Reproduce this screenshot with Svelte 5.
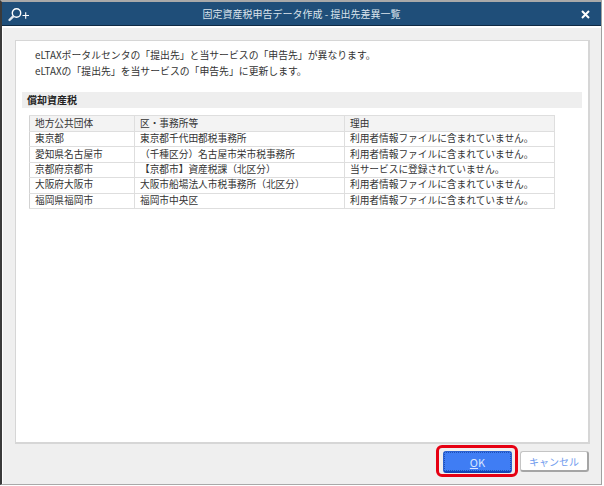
<script>
  const rows = [
    ['東京都', '東京都千代田都税事務所', '利用者情報ファイルに含まれていません。'],
    ['愛知県名古屋市', '（千種区分）名古屋市栄市税事務所', '利用者情報ファイルに含まれていません。'],
    ['京都府京都市', '【京都市】資産税課（北区分）', '当サービスに登録されていません。'],
    ['大阪府大阪市', '大阪市船場法人市税事務所（北区分）', '利用者情報ファイルに含まれていません。'],
    ['福岡県福岡市', '福岡市中央区', '利用者情報ファイルに含まれていません。']
  ];
</script>

<div class="window">
  <header class="titlebar">
    <svg class="logo" width="24" height="16" viewBox="0 0 24 16" aria-hidden="true">
      <circle cx="9.5" cy="7" r="4.2" fill="none" stroke="#fff" stroke-width="1.4" />
      <path d="M6.2 10.3 L2.5 14" stroke="#dfe7ef" stroke-width="2.4" stroke-linecap="round" />
      <path d="M15.5 9.5h6.5M18.7 6.2v6.6" stroke="#fff" stroke-width="1.1" />
    </svg>
    <h1>固定資産税申告データ作成 - 提出先差異一覧</h1>
    <svg class="close" width="9" height="9" viewBox="0 0 9 9" aria-hidden="true">
      <path d="M1 1L8 8M8 1L1 8" stroke="#fff" stroke-width="2" />
    </svg>
  </header>

  <main class="body">
    <section class="panel">
      <div class="message">
        <p>eLTAXポータルセンタの「提出先」と当サービスの「申告先」が異なります。</p>
        <p>eLTAXの「提出先」を当サービスの「申告先」に更新します。</p>
      </div>
      <h2>償却資産税</h2>
      <table>
        <thead>
          <tr><th class="c1">地方公共団体</th><th class="c2">区・事務所等</th><th class="c3">理由</th></tr>
        </thead>
        <tbody>
          {#each rows as r}
            <tr><td>{r[0]}</td><td>{r[1]}</td><td>{r[2]}</td></tr>
          {/each}
        </tbody>
      </table>
    </section>
    <footer class="actions">
      <button class="ok"><span><u>O</u>K</span></button>
      <button class="cancel">キャンセル</button>
    </footer>
  </main>
</div>

<style>
  :global(body) {
    margin: 0;
    background: #fff;
  }
  .window {
    box-sizing: border-box;
    width: 602px;
    height: 485px;
    display: flex;
    flex-direction: column;
    border-top: 2px solid #a9a9a9;
    border-left: 2px solid #3a3a3a;
    border-right: 1px solid #a0a0a0;
    border-bottom: 1px solid #a9a9a9;
    font-family: "Noto Sans CJK JP", "Liberation Sans", sans-serif;
    font-size: 9.7px;
    color: #333;
  }
  .titlebar {
    flex: none;
    box-sizing: border-box;
    height: 24px;
    background: #1f4e79;
    border-bottom: 1px solid #0f2a44;
    display: flex;
    align-items: center;
    padding: 0 11px 0 5px;
  }
  .logo {
    flex: none;
  }
  .titlebar h1 {
    flex: 1;
    margin: 0;
    font-size: 10px;
    font-weight: 400;
    color: #dbe4ec;
    text-align: center;
    padding-right: 9px;
  }
  .close {
    flex: none;
    margin-top: 1px;
  }
  .body {
    flex: 1;
    min-height: 0;
    background: #efefef;
    border-top: 2px solid #fff;
    border-left: 1px solid #fff;
    padding: 12px 11px 0 12px;
    display: flex;
    flex-direction: column;
  }
  .panel {
    box-sizing: border-box;
    height: 404px;
    background: #fff;
    border: 1px solid #d6d6d6;
    border-width: 1px 2px 2px 1px;
    padding: 0 6px 0 6px;
  }
  .message {
    padding: 6px 0 0 13px;
    height: 45px;
    font-size: 9.85px;
  }
  .message p {
    margin: 0;
    line-height: 16px;
  }
  h2 {
    margin: 0;
    background: #eeeeee;
    height: 16px;
    line-height: 16px;
    font-size: 10px;
    font-weight: 700;
    color: #222;
    padding-left: 5px;
    font-family: "Noto Sans CJK JP", serif;
  }
  table {
    margin: 7px 0 0 7px;
    width: 526px;
    table-layout: fixed;
    border-collapse: collapse;
    border: 1px solid #c9c9c9;
  }
  th, td {
    box-sizing: border-box;
    border: 1px solid #dedede;
    border-left-color: #d2d2d2;
    padding: 0 0 1px 5px;
    height: 15.4px;
    line-height: 13px;
    font-weight: 400;
    text-align: left;
    white-space: nowrap;
    overflow: hidden;
    color: #333;
  }
  th {
    background: #f3f3f3;
    height: 16px;
  }
  .c1 { width: 105px; }
  .c2 { width: 210px; }
  .actions {
    display: flex;
    justify-content: flex-end;
    align-items: flex-start;
    gap: 8px;
    padding: 7px 1px 0 0;
  }
  button {
    box-sizing: border-box;
    font-family: inherit;
    font-size: 10px;
    padding: 0;
    cursor: pointer;
  }
  .ok {
    position: relative;
    width: 69px;
    height: 22px;
    background: #3f7df4;
    color: #fff;
    border: 1px solid #2c62d0;
    border-bottom: 2px solid #1447b8;
    border-radius: 3px;
  }
  .ok span {
    display: flex;
    align-items: center;
    justify-content: center;
    height: 100%;
    box-sizing: border-box;
    border: 1px dotted #1f50b5;
    font-size: 11px;
    color: #d8e6ff;
  }
  .ok::after {
    content: "";
    position: absolute;
    inset: -7px -7px -6px -8px;
    border: 3px solid #e60012;
    border-radius: 6px;
  }
  .cancel {
    width: 69px;
    height: 21px;
    background: #fff;
    color: #6f9bee;
    border: 1px solid #c4c4c4;
    border-right: 2px solid #a5a5a5;
    border-bottom: 2px solid #a5a5a5;
    border-radius: 3px;
  }
</style>
